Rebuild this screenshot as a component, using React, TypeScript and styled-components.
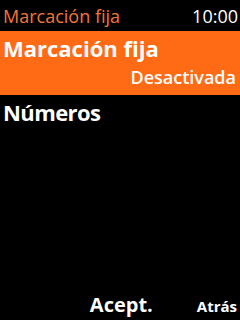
import React from "react";
import styled, { createGlobalStyle } from "styled-components";

const Global = createGlobalStyle`
  html, body { margin: 0; padding: 0; background: #000; }
  body { width: 240px; height: 320px; overflow: hidden; font-family: "Open Sans", "DejaVu Sans", sans-serif; }
`;

const Screen = styled.div`
  width: 240px;
  height: 320px;
  background: #000;
  display: flex;
  flex-direction: column;
  color: #fff;
`;

const StatusBar = styled.div`
  height: 31px;
  display: flex;
  align-items: center;
  justify-content: space-between;
  padding: 0 2px 0 3px;
  font-size: 18px;
`;

const Title = styled.span`
  color: #f2763a;
`;

const Clock = styled.span`
  color: #fff;
`;

const Item = styled.div<{ $selected?: boolean }>`
  display: flex;
  flex-direction: column;
  background: ${(p) => (p.$selected ? "#ff6a14" : "transparent")};
  padding: 2px 4px 4px 3px;
`;

const ItemLabel = styled.div<{ $narrow?: boolean }>`
  font-size: 22px;
  font-weight: 700;
  line-height: 30px;
  letter-spacing: ${(p) => (p.$narrow ? "-0.6px" : "0")};
`;

const ItemValue = styled.div`
  font-size: 18px;
  font-weight: 600;
  text-align: right;
  line-height: 28px;
`;

const Spacer = styled.div`
  flex: 1;
`;

const SoftKeys = styled.div`
  height: 26px;
  display: flex;
  align-items: baseline;
  justify-content: flex-end;
  padding: 0 3px 3px 0;
  gap: 44px;
`;

const KeyMain = styled.span`
  font-size: 20px;
  font-weight: 700;
`;

const KeyBack = styled.span`
  font-size: 15px;
  font-weight: 700;
`;

export default function App() {
  return (
    <>
      <Global />
      <Screen>
        <StatusBar>
          <Title>Marcación fija</Title>
          <Clock>10:00</Clock>
        </StatusBar>
        <Item $selected>
          <ItemLabel>Marcación fija</ItemLabel>
          <ItemValue>Desactivada</ItemValue>
        </Item>
        <Item>
          <ItemLabel $narrow>Números</ItemLabel>
        </Item>
        <Spacer />
        <SoftKeys>
          <KeyMain>Acept.</KeyMain>
          <KeyBack>Atrás</KeyBack>
        </SoftKeys>
      </Screen>
    </>
  );
}
